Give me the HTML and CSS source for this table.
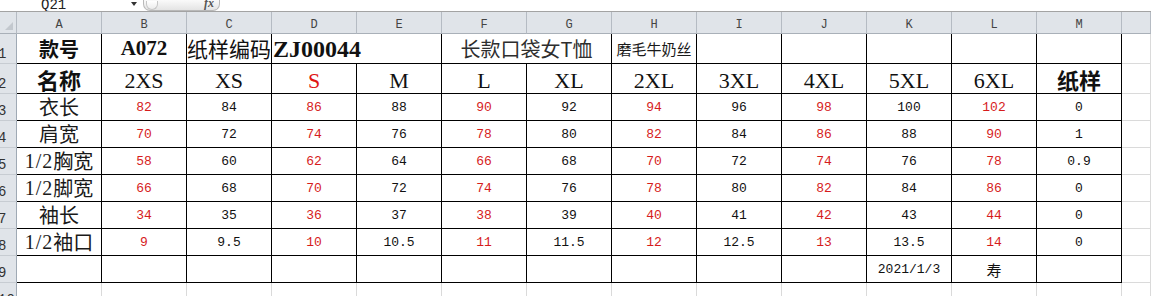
FILE: index.html
```html
<!DOCTYPE html>
<html lang="zh">
<head>
<meta charset="utf-8">
<title>尺码表</title>
<link rel="stylesheet" href="styles.css">
</head>
<body>
<div class="top">
  <div class="namebox"><span class="name">Q21</span><span class="arrow"></span></div>
  <div class="fxbox"><span class="knob"></span><span class="fx">fx</span></div>
  <div class="formula"></div>
</div>
<div class="sheet">
  <div class="h corner"><span class="tri"></span></div>
  <div class="h col">A</div><div class="h col">B</div><div class="h col">C</div><div class="h col">D</div><div class="h col">E</div><div class="h col">F</div><div class="h col">G</div><div class="h col">H</div><div class="h col">I</div><div class="h col">J</div><div class="h col">K</div><div class="h col">L</div><div class="h col">M</div><div class="h col"></div>

  <div class="h rn">1</div>
  <div class="c k t1 bold">款号</div>
  <div class="c k t1 code">A072</div>
  <div class="c k t1 cjk21">纸样编码</div>
  <div class="c k t1 span2 left zj">ZJ00044</div>
  <div class="c k t1 span2 title">长款口袋女T恤</div>
  <div class="c k t1 fab">磨毛牛奶丝</div>
  <div class="c k"></div><div class="c k"></div><div class="c k"></div><div class="c k"></div><div class="c k"></div>
  <div class="c"></div>

  <div class="h rn">2</div>
  <div class="c k row2 bold big">名称</div>
  <div class="c k row2 sz">2XS</div>
  <div class="c k row2 sz">XS</div>
  <div class="c k row2 sz red">S</div>
  <div class="c k row2 sz">M</div>
  <div class="c k row2 sz">L</div>
  <div class="c k row2 sz">XL</div>
  <div class="c k row2 sz">2XL</div>
  <div class="c k row2 sz">3XL</div>
  <div class="c k row2 sz">4XL</div>
  <div class="c k row2 sz">5XL</div>
  <div class="c k row2 sz">6XL</div>
  <div class="c k row2 bold big">纸样</div>
  <div class="c"></div>

  <div class="h rn">3</div>
  <div class="c k lab">衣长</div>
  <div class="c k n r">82</div><div class="c k n">84</div><div class="c k n r">86</div><div class="c k n">88</div><div class="c k n r">90</div><div class="c k n">92</div><div class="c k n r">94</div><div class="c k n">96</div><div class="c k n r">98</div><div class="c k n">100</div><div class="c k n r">102</div><div class="c k n">0</div>
  <div class="c"></div>

  <div class="h rn">4</div>
  <div class="c k lab">肩宽</div>
  <div class="c k n r">70</div><div class="c k n">72</div><div class="c k n r">74</div><div class="c k n">76</div><div class="c k n r">78</div><div class="c k n">80</div><div class="c k n r">82</div><div class="c k n">84</div><div class="c k n r">86</div><div class="c k n">88</div><div class="c k n r">90</div><div class="c k n">1</div>
  <div class="c"></div>

  <div class="h rn">5</div>
  <div class="c k lab"><span class="frac">1/2</span>胸宽</div>
  <div class="c k n r">58</div><div class="c k n">60</div><div class="c k n r">62</div><div class="c k n">64</div><div class="c k n r">66</div><div class="c k n">68</div><div class="c k n r">70</div><div class="c k n">72</div><div class="c k n r">74</div><div class="c k n">76</div><div class="c k n r">78</div><div class="c k n">0.9</div>
  <div class="c"></div>

  <div class="h rn">6</div>
  <div class="c k lab"><span class="frac">1/2</span>脚宽</div>
  <div class="c k n r">66</div><div class="c k n">68</div><div class="c k n r">70</div><div class="c k n">72</div><div class="c k n r">74</div><div class="c k n">76</div><div class="c k n r">78</div><div class="c k n">80</div><div class="c k n r">82</div><div class="c k n">84</div><div class="c k n r">86</div><div class="c k n">0</div>
  <div class="c"></div>

  <div class="h rn">7</div>
  <div class="c k lab">袖长</div>
  <div class="c k n r">34</div><div class="c k n">35</div><div class="c k n r">36</div><div class="c k n">37</div><div class="c k n r">38</div><div class="c k n">39</div><div class="c k n r">40</div><div class="c k n">41</div><div class="c k n r">42</div><div class="c k n">43</div><div class="c k n r">44</div><div class="c k n">0</div>
  <div class="c"></div>

  <div class="h rn">8</div>
  <div class="c k lab"><span class="frac">1/2</span>袖口</div>
  <div class="c k n r">9</div><div class="c k n">9.5</div><div class="c k n r">10</div><div class="c k n">10.5</div><div class="c k n r">11</div><div class="c k n">11.5</div><div class="c k n r">12</div><div class="c k n">12.5</div><div class="c k n r">13</div><div class="c k n">13.5</div><div class="c k n r">14</div><div class="c k n">0</div>
  <div class="c"></div>

  <div class="h rn">9</div>
  <div class="c k"></div><div class="c k"></div><div class="c k"></div><div class="c k"></div><div class="c k"></div><div class="c k"></div><div class="c k"></div><div class="c k"></div><div class="c k"></div><div class="c k"></div>
  <div class="c k n">2021/1/3</div>
  <div class="c k shou">寿</div>
  <div class="c k"></div>
  <div class="c"></div>

  <div class="h rn">10</div>
  <div class="c"></div><div class="c"></div><div class="c"></div><div class="c"></div><div class="c"></div><div class="c"></div><div class="c"></div><div class="c"></div><div class="c"></div><div class="c"></div><div class="c"></div><div class="c"></div><div class="c"></div><div class="c"></div>
</div>
</body>
</html>
```

FILE: styles.css
```css
* { box-sizing: border-box; }
html, body {
  margin: 0;
  padding: 0;
  background: #fff;
  width: 1151px;
  height: 296px;
  overflow: hidden;
}

/* formula bar strip */
.top {
  display: flex;
  height: 12px;
  border-bottom: 1px solid #a3a3a3;
  overflow: hidden;
  background: #fff;
}
.namebox {
  width: 141px;
  display: flex;
  align-items: flex-end;
  position: relative;
}
.name {
  font-family: "Liberation Mono", monospace;
  font-size: 14px;
  line-height: 14px;
  color: #222;
  padding-left: 41px;
  margin-bottom: -1px;
}
.arrow {
  margin-left: auto;
  margin-right: 4px;
  align-self: flex-start;
  margin-top: 2px;
  width: 0;
  height: 0;
  border-left: 3px solid transparent;
  border-right: 3px solid transparent;
  border-top: 4px solid #333;
}
.fxbox {
  width: 77px;
  margin-left: 2px;
  height: 11px;
  border: 1px solid #b9b9b9;
  border-top: none;
  border-radius: 0 0 7px 7px;
  background: linear-gradient(#fafafa, #e4e4e4);
  display: flex;
  align-items: flex-end;
  justify-content: space-between;
  padding: 0 5px 0 2px;
}
.knob {
  width: 12px;
  height: 9px;
  border: 1px solid #c6c6c6;
  border-top: none;
  border-radius: 0 0 6px 6px;
  background: linear-gradient(#ffffff, #ececec);
}
.fx {
  font-family: "Liberation Serif", serif;
  font-style: italic;
  font-weight: bold;
  font-size: 12px;
  line-height: 12px;
  color: #555;
  margin-bottom: 1px;
}
.formula { flex: 1; }

/* sheet grid */
.sheet {
  display: grid;
  grid-template-columns: 17px repeat(13, 85px) 1fr;
  grid-template-rows: 22px 30px 30px repeat(8, 27px);
}
.h {
  background: #e0e4e9;
  border-right: 1px solid #b5bbc3;
  border-bottom: 1px solid #a9b0b8;
  font-family: "Liberation Mono", monospace;
  color: #333;
  overflow: hidden;
}
.corner { position: relative; }
.tri {
  position: absolute;
  right: 3px;
  bottom: 3px;
  width: 0;
  height: 0;
  border-left: 8px solid transparent;
  border-bottom: 8px solid #c3c8ce;
}
.col {
  display: flex;
  align-items: flex-end;
  justify-content: center;
  font-size: 12px;
  line-height: 12px;
  padding-bottom: 2px;
  color: #444;
}
.rn {
  display: flex;
  align-items: flex-end;
  font-size: 14px;
  line-height: 14px;
  padding-bottom: 2px;
  text-indent: -2px;
  background: #e0e4e9;
  border-bottom-color: #c7ccd2;
  border-right-color: #9fa9b4;
}

.c {
  border-right: 1px solid #dadada;
  border-bottom: 1px solid #dadada;
  display: flex;
  align-items: center;
  justify-content: center;
  white-space: nowrap;
  min-width: 0;
  color: #111;
  font-family: "Noto Sans CJK SC", sans-serif;
}
.k {
  border-right-color: #000;
  border-bottom-color: #000;
}
.span2 { grid-column: span 2; }
.left { justify-content: flex-start; padding-left: 1px; }

.bold {
  font-family: "Noto Sans CJK SC", sans-serif;
  font-weight: bold;
  font-size: 20px;
  line-height: 20px;
}
.big { font-size: 22px; line-height: 22px; }
.code {
  font-family: "Liberation Serif", serif;
  font-weight: bold;
  font-size: 21px;
}
.cjk21 {
  font-size: 21px;
  line-height: 21px;
  justify-content: flex-start;
}
.zj {
  font-family: "Liberation Serif", serif;
  font-weight: bold;
  font-size: 24px;
  padding-top: 1px;
}
.title {
  font-size: 20px;
  line-height: 20px;
  color: #2e2e2e;
}
.fab {
  font-size: 15px;
  line-height: 15px;
  color: #1a1a1a;
}
.row2 {
  align-items: flex-end;
  padding-bottom: 1px;
}
.row2.big { padding-bottom: 3px; }
.sz {
  font-family: "Liberation Serif", serif;
  font-size: 22px;
  line-height: 22px;
}
.red { color: #e01414; }
.lab {
  font-size: 20px;
  line-height: 20px;
  color: #1a1a1a;
}
.frac {
  font-family: "Liberation Serif", serif;
  letter-spacing: 1px;
}
.n {
  font-family: "Liberation Mono", monospace;
  font-size: 13px;
  line-height: 13px;
  color: #111;
}
.n.r { color: #d61c1c; }
.shou {
  font-size: 15px;
  line-height: 15px;
}
```
